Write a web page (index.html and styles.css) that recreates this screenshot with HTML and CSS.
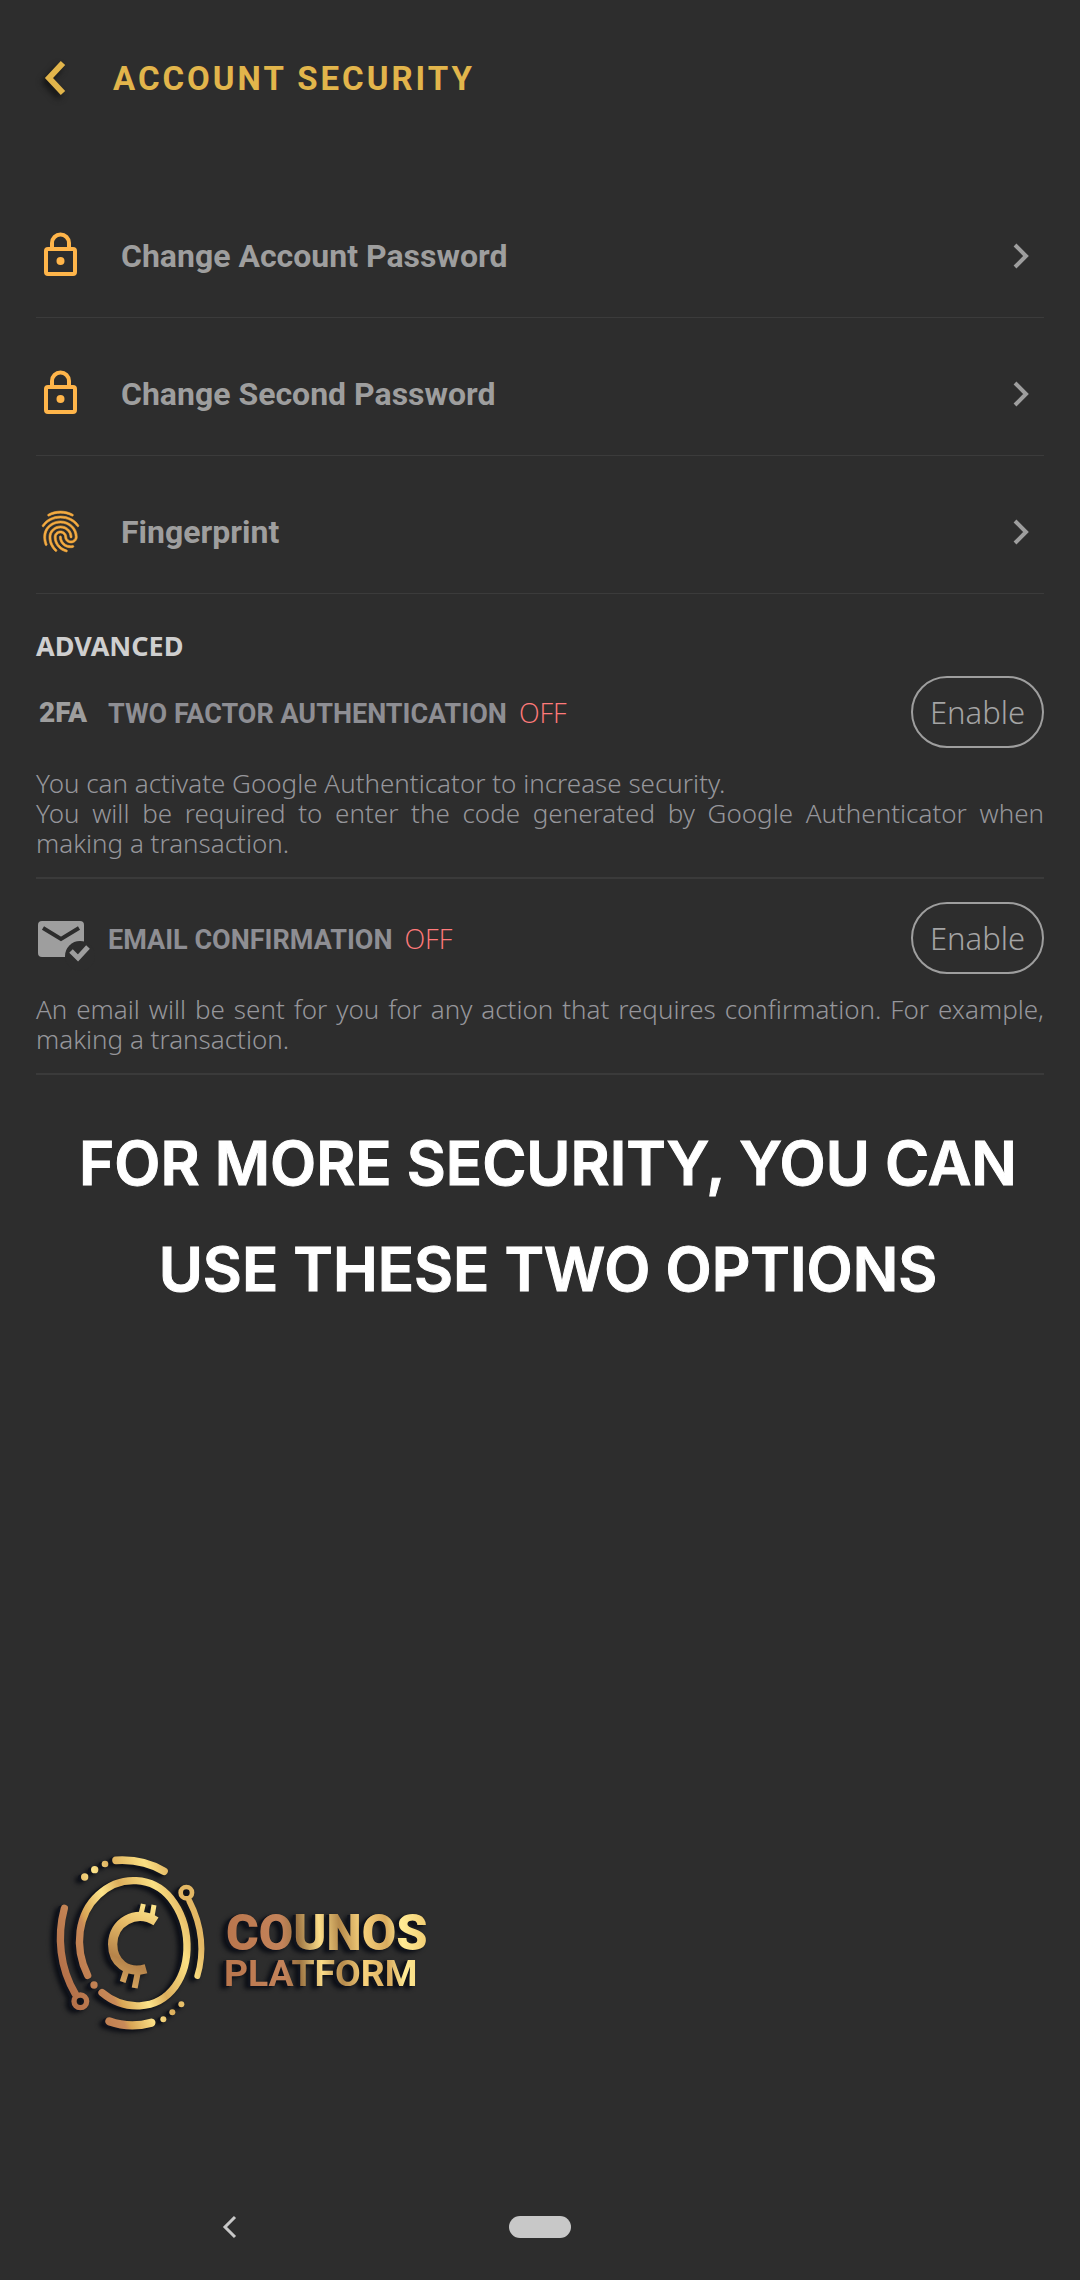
FILE: index.html
```html
<!DOCTYPE html>
<html lang="en">
<head>
  <meta charset="UTF-8" />
  <meta name="viewport" content="width=device-width, initial-scale=1.0" />
  <title>Account Security</title>
  <link rel="stylesheet" href="styles.css">
</head>
<body>
  <header class="top-bar">
    <a href="#" class="back-link" aria-label="Back">
      <svg width="36" height="40" viewBox="0 0 36 40"><path d="M27 5 L13 20 L27 35" fill="none" stroke="#e2b54b" stroke-width="6" /></svg>
    </a>
    <h1>ACCOUNT SECURITY</h1>
  </header>

  <main>
    <nav class="menu">
      <a href="#" class="menu-row">
        <svg class="menu-icon" viewBox="0 0 49 49">
          <path d="M16 17 V12 a8.500 8.500 0 0 1 17 0 V17" fill="none" stroke="#ffb54a" stroke-width="4" />
          <rect x="10" y="18" width="29" height="25" rx="2" fill="none" stroke="#ffb54a" stroke-width="4" />
          <circle cx="24.500" cy="30" r="4" fill="#ffb54a" />
        </svg>
        <span class="menu-text">Change Account Password</span>
        <svg class="chevron" viewBox="0 0 32 32"><path d="M10 5 L21 16 L10 27" /></svg>
      </a>
      <a href="#" class="menu-row">
        <svg class="menu-icon" viewBox="0 0 49 49">
          <path d="M16 17 V12 a8.500 8.500 0 0 1 17 0 V17" fill="none" stroke="#ffb54a" stroke-width="4" />
          <rect x="10" y="18" width="29" height="25" rx="2" fill="none" stroke="#ffb54a" stroke-width="4" />
          <circle cx="24.500" cy="30" r="4" fill="#ffb54a" />
        </svg>
        <span class="menu-text">Change Second Password</span>
        <svg class="chevron" viewBox="0 0 32 32"><path d="M10 5 L21 16 L10 27" /></svg>
      </a>
      <a href="#" class="menu-row">
        <svg class="menu-icon" viewBox="0 0 24 24">
          <path fill="#f5ab40" stroke="#f5ab40" stroke-width="0.300" d="M17.81 4.47c-.08 0-.16-.02-.23-.06C15.66 3.42 14 3 12.01 3c-1.98 0-3.86.47-5.57 1.41-.24.13-.54.04-.68-.2-.13-.24-.04-.55.2-.68C7.82 2.52 9.86 2 12.01 2c2.13 0 3.99.47 6.03 1.52.25.13.34.43.21.67-.09.18-.26.28-.44.28zM3.5 9.72c-.1 0-.2-.03-.29-.09-.23-.16-.28-.47-.12-.7.99-1.4 2.25-2.5 3.75-3.27C9.98 4.04 14 4.03 17.15 5.65c1.5.77 2.76 1.86 3.75 3.25.16.22.11.54-.12.7-.23.16-.54.11-.7-.12-.9-1.26-2.04-2.25-3.39-2.94-2.87-1.47-6.54-1.47-9.4.01-1.36.7-2.5 1.7-3.4 2.96-.08.14-.23.21-.39.21zm6.25 12.07c-.13 0-.26-.05-.35-.15-.87-.87-1.34-1.43-2.01-2.64-.69-1.23-1.05-2.73-1.05-4.34 0-2.97 2.54-5.39 5.66-5.39s5.66 2.42 5.66 5.39c0 .28-.22.5-.5.5s-.5-.22-.5-.5c0-2.42-2.09-4.39-4.66-4.39-2.57 0-4.66 1.97-4.66 4.39 0 1.44.32 2.77.93 3.85.64 1.15 1.08 1.64 1.85 2.42.19.2.19.51 0 .71-.11.1-.24.15-.37.15zm7.17-1.85c-1.19 0-2.24-.3-3.1-.89-1.49-1.01-2.38-2.65-2.38-4.39 0-.28.22-.5.5-.5s.5.22.5.5c0 1.41.72 2.74 1.94 3.56.71.48 1.54.71 2.54.71.24 0 .64-.03 1.04-.1.27-.05.53.13.58.41.05.27-.13.53-.41.58-.57.11-1.07.12-1.21.12zM14.91 22c-.04 0-.09-.01-.13-.02-1.59-.44-2.63-1.03-3.72-2.1-1.4-1.39-2.17-3.24-2.17-5.22 0-1.62 1.38-2.94 3.08-2.94 1.7 0 3.08 1.32 3.08 2.94 0 1.07.93 1.94 2.08 1.94s2.08-.87 2.08-1.94c0-3.77-3.25-6.83-7.25-6.83-2.84 0-5.44 1.58-6.61 4.03-.39.81-.59 1.76-.59 2.8 0 .78.07 2.01.67 3.61.1.26-.03.55-.29.64-.26.1-.55-.04-.64-.29-.49-1.31-.73-2.61-.73-3.96 0-1.2.23-2.29.68-3.24 1.33-2.79 4.28-4.6 7.51-4.6 4.55 0 8.25 3.51 8.25 7.83 0 1.62-1.38 2.94-3.08 2.94s-3.08-1.32-3.08-2.94c0-1.07-.93-1.94-2.08-1.94s-2.08.87-2.08 1.94c0 1.71.66 3.31 1.87 4.51.95.94 1.86 1.46 3.27 1.85.27.07.42.35.35.61-.05.23-.26.38-.47.38z" />
        </svg>
        <span class="menu-text">Fingerprint</span>
        <svg class="chevron" viewBox="0 0 32 32"><path d="M10 5 L21 16 L10 27" /></svg>
      </a>
    </nav>

    <h2>ADVANCED</h2>

    <section class="option">
      <div class="option-head">
        <span class="option-icon twofa">2FA</span>
        <h3>TWO FACTOR AUTHENTICATION</h3>
        <span class="status">OFF</span>
        <button type="button" aria-label="Enable two factor authentication">Enable</button>
      </div>
      <p>You can activate Google Authenticator to increase security.<br>You will be required to enter the code generated by Google Authenticator when making a transaction.</p>
    </section>

    <section class="option">
      <div class="option-head">
        <svg class="option-icon" viewBox="0 0 52 50">
          <rect x="2" y="8" width="46" height="36" rx="4" fill="#9e9e9e" />
          <path d="M7 15 L25 26 L43 15" fill="none" stroke="#2d2d2d" stroke-width="4" />
          <circle cx="44" cy="43" r="15" fill="#2d2d2d" />
          <path d="M35 38 L42 45 L52 34" fill="none" stroke="#9e9e9e" stroke-width="5" />
        </svg>
        <h3>EMAIL CONFIRMATION</h3>
        <span class="status">OFF</span>
        <button type="button" aria-label="Enable email confirmation">Enable</button>
      </div>
      <p>An email will be sent for you for any action that requires confirmation. For example, making a transaction.</p>
    </section>

    <p class="callout">FOR MORE SECURITY, YOU CAN<br>USE THESE TWO OPTIONS</p>
  </main>

  <footer>
    <svg class="logo" viewBox="0 0 1260 690" role="img" aria-label="Counos Platform">
      <defs>
        <linearGradient id="coin" gradientUnits="userSpaceOnUse" x1="120" y1="400" x2="500" y2="240">
          <stop offset="0" stop-color="#b5724a" />
          <stop offset="0.260" stop-color="#c98a58" />
          <stop offset="0.300" stop-color="#d9a655" />
          <stop offset="0.480" stop-color="#fde48a" />
          <stop offset="0.620" stop-color="#dcae5c" />
          <stop offset="0.850" stop-color="#fbe083" />
          <stop offset="1" stop-color="#e3b764" />
        </linearGradient>
        <linearGradient id="sign" gradientUnits="userSpaceOnUse" x1="300" y1="470" x2="400" y2="230">
          <stop offset="0" stop-color="#d9a962" />
          <stop offset="0.300" stop-color="#b5834a" />
          <stop offset="0.700" stop-color="#e6ba66" />
          <stop offset="1" stop-color="#fde48a" />
        </linearGradient>
        <linearGradient id="name" gradientUnits="userSpaceOnUse" x1="615" y1="300" x2="1215" y2="260">
          <stop offset="0" stop-color="#b9764d" />
          <stop offset="0.280" stop-color="#c4835a" />
          <stop offset="0.360" stop-color="#9c7442" />
          <stop offset="0.470" stop-color="#fbdc88" />
          <stop offset="0.570" stop-color="#b58a4c" />
          <stop offset="0.680" stop-color="#f8d27c" />
          <stop offset="0.800" stop-color="#d9ab5e" />
          <stop offset="0.880" stop-color="#ffeb95" />
          <stop offset="1" stop-color="#f3cf74" />
        </linearGradient>
      </defs>
      <g fill="none" stroke="url(#coin)" stroke-linecap="round">
        <path stroke-width="22" d="M203 436 C160 350 175 250 235 195 C302 132 400 140 452 205 C515 285 515 400 465 470 C410 545 310 542 246 488" />
        <path stroke-width="22" d="M133 235 C110 320 120 415 166 492" />
        <circle stroke-width="16" cx="181" cy="514" r="19" />
        <path stroke-width="18" d="M508 213 C548 290 553 370 532 438" />
        <circle stroke-width="14" cx="499" cy="188" r="17" />
        <path stroke-width="23" d="M288 91 Q370 86 432 124" />
        <path stroke-width="25" d="M268 574 Q330 596 394 578" />
      </g>
      <g fill="url(#coin)">
        <circle cx="194" cy="141" r="11" />
        <circle cx="224" cy="119" r="11" />
        <circle cx="255" cy="102" r="10" />
        <circle cx="222" cy="465" r="11" />
        <circle cx="430" cy="568" r="9" />
        <circle cx="457" cy="547" r="9" />
        <circle cx="484" cy="523" r="9" />
      </g>
      <g fill="none" stroke="url(#sign)">
        <path stroke-width="28" d="M408 274 C348 236 278 277 278 343 C278 398 322 432 378 416" />
        <path stroke-width="15" d="M370 222 L363 252 M402 225 L395 266" />
        <path stroke-width="18" d="M320 418 L308 456 M354 424 L344 474" />
      </g>
      <g class="logo-text" fill="url(#name)">
        <text class="logo-name" x="618" y="360">COUNOS</text>
        <text class="logo-sub" x="612" y="468">PLATFORM</text>
      </g>
    </svg>
    <nav class="system-nav">
      <a href="#" aria-label="System back">
        <svg width="22" height="26" viewBox="0 0 22 26"><path d="M16 3 L6 13 L16 23" fill="none" stroke="#c8c8c8" stroke-width="3" /></svg>
      </a>
      <a href="#" class="home-pill" aria-label="Home"></a>
    </nav>
  </footer>
</body>
</html>
```
FILE: styles.css
```css
* {
  box-sizing: border-box;
}
body {
  margin: 0;
  min-height: 100vh;
  display: flex;
  flex-direction: column;
  background: #2d2d2d;
  color: #9e9e9e;
  font-family: 'Noto Sans', 'Open Sans', sans-serif;
}
a {
  color: inherit;
  text-decoration: none;
}
h1, h2, h3, p {
  margin: 0;
}
svg {
  display: block;
  flex: none;
}
.top-bar {
  display: flex;
  align-items: center;
  gap: 41px;
  height: 156px;
  padding: 0 36px;
}
.back-link {
  filter: drop-shadow(-3px 4px 3px #111);
}
h1 {
  font-family: Roboto, sans-serif;
  font-size: 33px;
  font-weight: 700;
  letter-spacing: 3px;
  color: #e2b54b;
}
main {
  padding: 24px 36px 0;
}
.menu-row {
  display: flex;
  align-items: center;
  gap: 36px;
  height: 138px;
  padding: 14px 7px 0 0;
  border-bottom: 1px solid #3b3b3b;
}
.menu-icon {
  width: 49px;
  height: 49px;
}
.menu-text {
  flex: 1;
  font-family: Roboto, sans-serif;
  font-size: 32px;
  font-weight: 700;
}
.chevron {
  width: 32px;
  height: 32px;
  fill: none;
  stroke: #9e9e9e;
  stroke-width: 4;
}
h2 {
  padding: 32px 0 10px;
  font-size: 27px;
  line-height: 40px;
  font-weight: 700;
  color: #cfcfcf;
}
.option {
  padding-bottom: 19px;
  border-bottom: 2px solid #3a3a3a;
}
.option + .option {
  padding-top: 23px;
}
.option-head {
  display: flex;
  align-items: center;
}
.option-icon {
  width: 52px;
  margin-right: 20px;
  overflow: visible;
}
.twofa {
  padding-left: 3px;
  font-family: Roboto, sans-serif;
  font-size: 28px;
  font-weight: 900;
}
h3 {
  padding-top: 3px;
  font-family: Roboto, sans-serif;
  font-size: 27px;
  font-weight: 700;
  color: #8e8e93;
}
.status {
  margin-left: 12px;
  font-family: 'Open Sans', sans-serif;
  font-size: 27px;
  font-weight: 300;
  color: #ff7a7a;
}
button {
  margin-left: auto;
  width: 133px;
  height: 72px;
  padding: 0;
  border: 2px solid #9e9e9e;
  border-radius: 36px;
  background: none;
  color: #a4a4a4;
  font-family: inherit;
  font-size: 31px;
  font-weight: 300;
  cursor: pointer;
}
.option p {
  margin-top: 20px;
  font-size: 26px;
  line-height: 30px;
  font-weight: 300;
  text-align: justify;
  color: #96969b;
}
.callout {
  padding: 35px 0 0 16px;
  font-family: Inter, sans-serif;
  font-size: 60px;
  line-height: 106px;
  font-weight: 600;
  text-align: center;
  color: #fff;
  -webkit-text-stroke: 1px #fff;
}
footer {
  margin-top: auto;
}
.logo {
  width: 420px;
  height: auto;
  margin: 0 0 114px 20px;
  filter: drop-shadow(-3px 1px 0 #10131c) drop-shadow(-3px 2px 2px #0c0e14);
}
.logo-text {
  font-family: Roboto, sans-serif;
}
.logo-name {
  font-size: 150px;
  font-weight: 900;
}
.logo-sub {
  font-size: 112px;
  font-weight: 700;
}
.system-nav {
  display: grid;
  grid-template-columns: repeat(3, 1fr);
  place-items: center;
  height: 106px;
  padding: 0 75px;
}
.home-pill {
  width: 62px;
  height: 22px;
  border-radius: 11px;
  background: #c8c8c8;
}
```
